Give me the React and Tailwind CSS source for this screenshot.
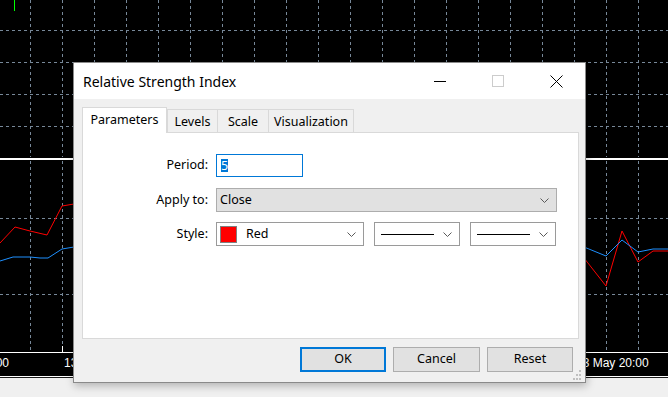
const GRID = '#778899'

function Chevron() {
    return (
        <svg width="9" height="5" viewBox="0 0 9 5" className="block">
            <polyline points="0.5,0.5 4.5,4.5 8.5,0.5" fill="none" stroke="#5a5a5a" strokeWidth="1" />
        </svg>
    )
}

function Chart() {
    const xs = []
    for (let x = 30; x <= 668; x += 32) xs.push(x + 0.5)
    return (
        <svg width="668" height="379" className="block">
            <rect x="0" y="0" width="668" height="377" fill="#000" />
            {/* main window grid */}
            {xs.map((x) => (
                <line key={'a' + x} x1={x} y1="0" x2={x} y2="157" stroke={GRID} strokeDasharray="3 3" />
            ))}
            {[30, 62, 94, 126].map((y) => (
                <line key={'h' + y} x1="0" y1={y + 0.5} x2="668" y2={y + 0.5} stroke={GRID} strokeDasharray="3 3" />
            ))}
            <line x1="14.5" y1="0" x2="14.5" y2="11" stroke="#00ff00" />

            {/* separator */}
            <rect x="0" y="158" width="668" height="2" fill="#fff" />

            {/* RSI subwindow grid */}
            {xs.map((x) => (
                <line key={'b' + x} x1={x} y1="161" x2={x} y2="352" stroke={GRID} strokeDasharray="3 3" />
            ))}
            {[218, 294].map((y) => (
                <line key={'s' + y} x1="0" y1={y + 0.5} x2="668" y2={y + 0.5} stroke={GRID} strokeDasharray="3 3" />
            ))}

            <polyline points="0,243 15,227 30,231 47,235 62,206 74,204" fill="none" stroke="#ff0000" />
            <polyline points="0,261 13,257 30,257 40,258 48,258 62,249 74,247" fill="none" stroke="#1e90ff" />
            <polyline points="584,258 606,286 622,231 638,262 653,251 668,251" fill="none" stroke="#ff0000" />
            <polyline points="584,247 606,256 622,240 638,252 653,249 668,249" fill="none" stroke="#1e90ff" />

            {/* time axis */}
            <line x1="0" y1="352.5" x2="668" y2="352.5" stroke="#fff" />
            <line x1="62.5" y1="346" x2="62.5" y2="352" stroke="#fff" />
            <line x1="574.5" y1="346" x2="574.5" y2="352" stroke="#fff" />
            <g fill="#fff" fontFamily="'Liberation Sans', Arial, sans-serif" fontSize="12">
                <text x="9" y="367" textAnchor="end">16:00</text>
                <text x="64" y="367">13 May 08:00</text>
                <text x="576" y="367">13 May 20:00</text>
            </g>
            <line x1="0" y1="376.5" x2="668" y2="376.5" stroke="#fff" />
            <line x1="0" y1="377.5" x2="668" y2="377.5" stroke="#1a1a1a" />
        </svg>
    )
}

function Tab({ label, active, className }) {
    if (active) {
        return (
            <div className={'relative top-px z-10 h-[26px] flex items-center justify-center border border-b-0 border-[#d9d9d9] bg-white ' + className}>
                {label}
            </div>
        )
    }
    return (
        <div className={'h-[23px] flex items-center justify-center pt-[2px] border border-b-0 border-[#d9d9d9] bg-[#f0f0f0] ' + className}>
            {label}
        </div>
    )
}

function Row({ label, children, className }) {
    return (
        <div className={'flex items-center ' + className}>
            <div className="w-[126px] text-right pr-px">{label}</div>
            <div className="ml-[7px] flex items-center gap-[10px]">{children}</div>
        </div>
    )
}

function LineSelect() {
    return (
        <div className="w-[86px] h-[24px] border border-[#9a9a9a] bg-white flex items-center pl-[6px] pr-[7px]">
            <div className="w-[53px] h-px bg-black" />
            <div className="ml-auto">
                <Chevron />
            </div>
        </div>
    )
}

export default function App() {
    return (
        <div className="relative w-[668px] h-[397px] bg-[#f0f0f0] overflow-hidden font-['Noto_Sans',sans-serif] text-black">
            <Chart />

            <div className="absolute left-[73px] top-[62px] w-[513px] h-[321px] border border-[#8a8a8a] bg-[#f0f0f0] shadow-[1px_3px_8px_rgba(0,0,0,0.25)] flex flex-col">

                <div className="h-[36px] shrink-0 bg-white flex items-center">
                    <span className="pl-[9px] text-[14px]">Relative Strength Index</span>
                    <div className="ml-auto flex h-full">
                        <div className="w-[58px] flex items-center justify-center">
                            <div className="w-[12px] h-px bg-black" />
                        </div>
                        <div className="w-[58px] flex items-center justify-center">
                            <div className="w-[12px] h-[12px] border border-[#cccccc]" />
                        </div>
                        <div className="w-[58px] flex items-center justify-center">
                            <svg width="13" height="13" viewBox="0 0 13 13" className="block">
                                <path d="M0.5 0.5 L12.5 12.5 M12.5 0.5 L0.5 12.5" stroke="#000" strokeWidth="1" />
                            </svg>
                        </div>
                    </div>
                </div>

                <div className="relative flex-1 pl-[8px] pt-[8px] text-[12.5px]">
                    <div className="flex items-end h-[25px]">
                        <Tab label="Parameters" active className="w-[85px]" />
                        <Tab label="Levels" className="w-[51px]" />
                        <Tab label="Scale" className="w-[52px] -ml-px" />
                        <Tab label="Visualization" className="w-[86px] -ml-px" />
                    </div>

                    <div className="w-[497px] h-[207px] border border-[#d9d9d9] bg-white pt-[21px]">
                        <Row label="Period:">
                            <div className="w-[87px] h-[23px] border border-[#0078d7] bg-white flex items-center pl-[4px]">
                                <span className="bg-[#0078d7] text-white leading-[13px]">5</span>
                            </div>
                        </Row>

                        <Row label="Apply to:" className="mt-[11px]">
                            <div className="w-[341px] h-[24px] border border-[#adadad] bg-[#e1e1e1] flex items-center pl-[3px] pr-[7px]">
                                <span>Close</span>
                                <div className="ml-auto">
                                    <Chevron />
                                </div>
                            </div>
                        </Row>

                        <Row label="Style:" className="mt-[10px]">
                            <div className="w-[148px] h-[24px] border border-[#9a9a9a] bg-white flex items-center pl-[3px] pr-[7px]">
                                <div className="w-[17px] h-[17px] border border-[#808080] bg-[#ff0000]" />
                                <span className="ml-[9px]">Red</span>
                                <div className="ml-auto">
                                    <Chevron />
                                </div>
                            </div>
                            <LineSelect />
                            <LineSelect />
                        </Row>
                    </div>

                    <div className="mt-[8px] flex justify-end gap-[7px] pr-[12px]">
                        <button className="w-[86px] h-[25px] border-2 border-[#0078d7] bg-[#e1e1e1] flex items-center justify-center">
                            OK
                        </button>
                        <button className="w-[87px] h-[25px] border border-[#adadad] bg-[#e1e1e1] flex items-center justify-center">
                            Cancel
                        </button>
                        <button className="w-[86px] h-[25px] border border-[#adadad] bg-[#e1e1e1] flex items-center justify-center">
                            Reset
                        </button>
                    </div>

                    <svg width="12" height="12" viewBox="0 0 12 12" className="absolute right-[2px] bottom-[1px]">
                        <g fill="#bfbfbf">
                            <rect x="8" y="1" width="2" height="2" />
                            <rect x="5" y="5" width="2" height="2" />
                            <rect x="8" y="5" width="2" height="2" />
                            <rect x="2" y="9" width="2" height="2" />
                            <rect x="5" y="9" width="2" height="2" />
                            <rect x="8" y="9" width="2" height="2" />
                        </g>
                    </svg>
                </div>
            </div>
        </div>
    )
}
